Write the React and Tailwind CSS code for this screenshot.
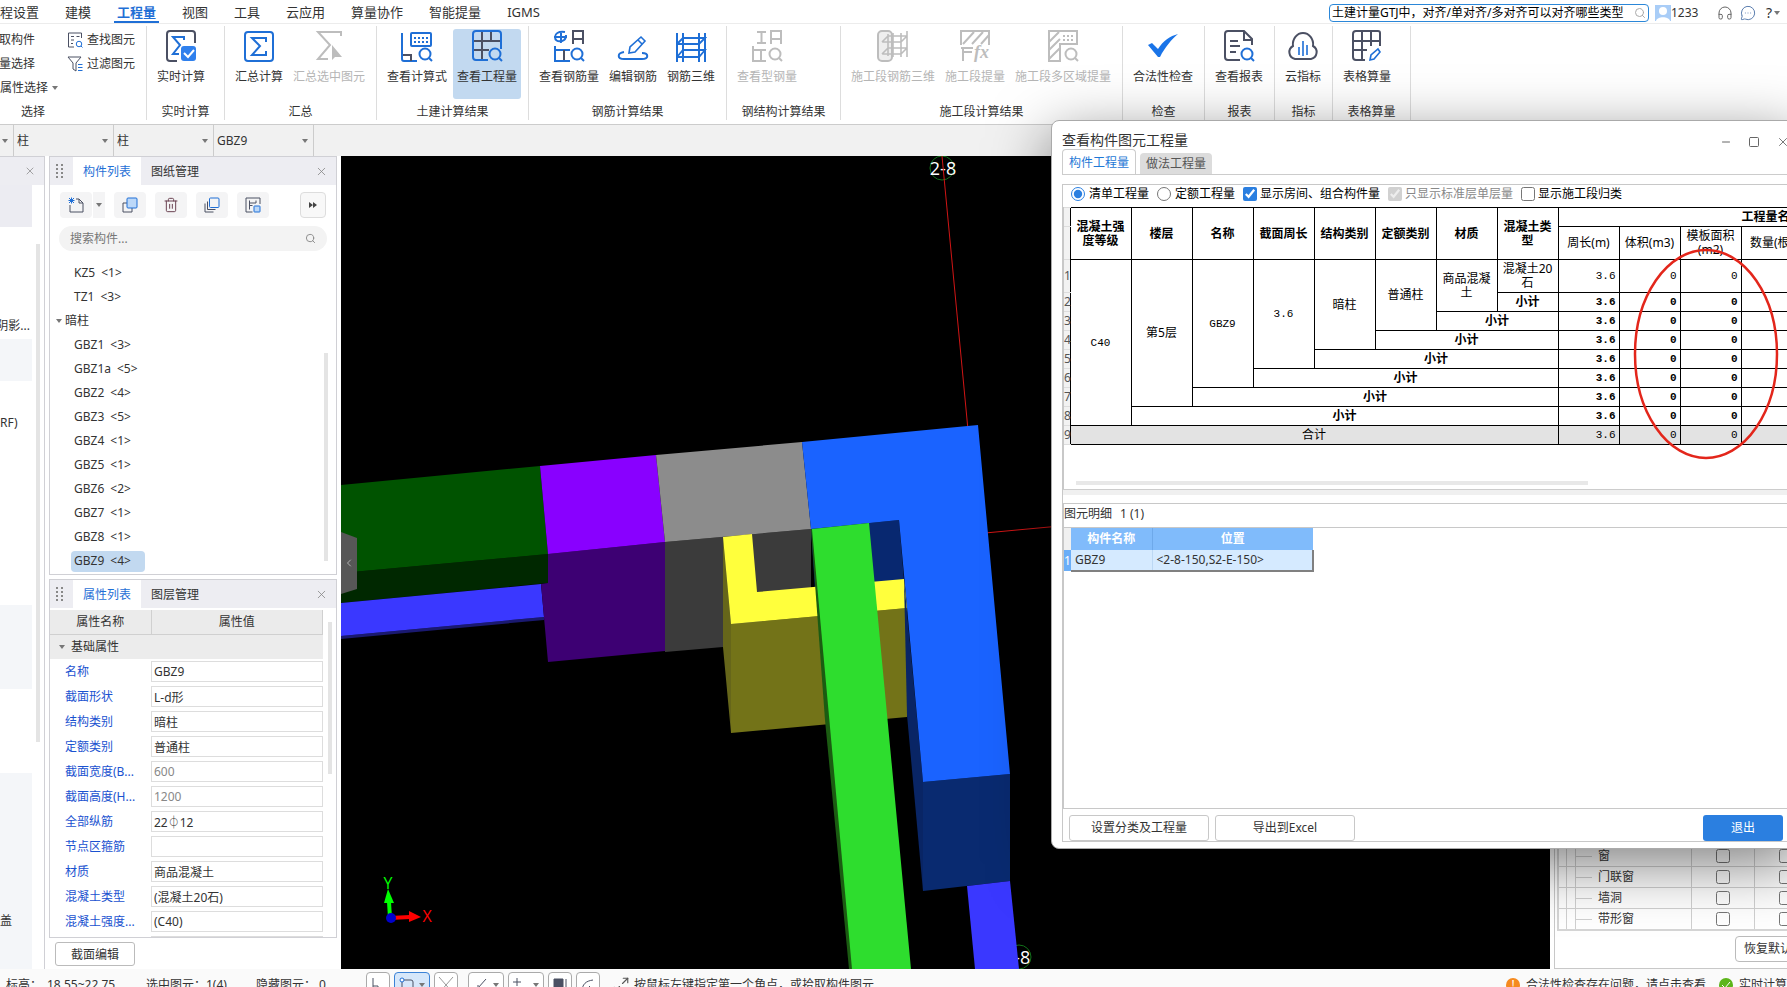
import React, { useState } from 'react';
import { Search, X, Minus, Square, Headphones, MessageCircleMore, ChevronLeft, Trash2, Maximize2 } from 'lucide-react';

const BLUE = '#1f6fd6';
const DARK = '#4b5063';
const GRAY = '#bdbdbd';

const menus = ['工程设置', '建模', '工程量', '视图', '工具', '云应用', '算量协作', '智能提量', 'IGMS'];

const components = [
  ['GBZ1', '<3>'],
  ['GBZ1a', '<5>'],
  ['GBZ2', '<4>'],
  ['GBZ3', '<5>'],
  ['GBZ4', '<1>'],
  ['GBZ5', '<1>'],
  ['GBZ6', '<2>'],
  ['GBZ7', '<1>'],
  ['GBZ8', '<1>'],
  ['GBZ9', '<4>'],
];

const properties = [
  ['名称', 'GBZ9'],
  ['截面形状', 'L-d形'],
  ['结构类别', '暗柱'],
  ['定额类别', '普通柱'],
  ['截面宽度(B...', '600', true],
  ['截面高度(H...', '1200', true],
  ['全部纵筋', '22⏀12'],
  ['节点区箍筋', ''],
  ['材质', '商品混凝土'],
  ['混凝土类型', '(混凝土20石)'],
  ['混凝土强度...', '(C40)'],
];

const Caret = ({ className = '' }) => (
  <svg viewBox="0 0 6 4" className={`w-[6px] h-[4px] shrink-0 ${className}`}>
    <path d="M0 0h6L3 4z" fill="#777" />
  </svg>
);

const Icon = ({ children, className = 'w-8 h-8' }) => (
  <svg viewBox="0 0 32 32" fill="none" strokeWidth="2" className={className}>
    {children}
  </svg>
);

const Magnifier = ({ color = BLUE }) => (
  <g stroke={color}>
    <circle cx="24" cy="24" r="5.5" />
    <path d="M28 28l3 3" />
  </g>
);

const RealtimeIcon = () => (
  <Icon>
    <path d="M12 31H5a3 3 0 0 1-3-3V4a3 3 0 0 1 3-3h22a3 3 0 0 1 3 3v9" stroke={DARK} />
    <path d="M19 10V7H8l7 8-7 9h6" stroke={BLUE} />
    <rect x="16" y="16" width="15" height="15" rx="3" fill="#2f80ed" />
    <path d="M19 23l4 4 6-7" stroke="#fff" />
  </Icon>
);

const SumIcon = () => (
  <Icon>
    <rect x="2" y="2" width="28" height="29" rx="3" stroke={BLUE} />
    <path d="M23 12V8H9l8 8-8 9h14v-4" stroke={BLUE} />
  </Icon>
);

const SumSelectedIcon = () => (
  <Icon>
    <path d="M28 6V2H5l12 13L5 29h10" stroke={GRAY} />
    <path d="M19 15v15l3-3h7z" fill={GRAY} />
  </Icon>
);

const FormulaIcon = () => (
  <Icon>
    <path d="M1 3v26a2 2 0 0 0 2 2h13" stroke={BLUE} />
    <path d="M2 25h8v6" stroke={DARK} />
    <rect x="10" y="3" width="20" height="13" rx="1" stroke={BLUE} />
    <path d="M13 8h15M13 12h15" stroke={BLUE} strokeDasharray="2 2" />
    <Magnifier />
  </Icon>
);

const QuantityIcon = () => (
  <Icon>
    <path d="M2 11h28M11 1v19M20 1v10M2 20h16M11 20v10" stroke={DARK} />
    <path d="M17 30H5a3 3 0 0 1-3-3V4a3 3 0 0 1 3-3h22a3 3 0 0 1 3 3v15" stroke={BLUE} />
    <Magnifier />
  </Icon>
);

const RebarViewIcon = () => (
  <Icon>
    <path d="M8 1v12M12 2C5 1 2 4 2 7s2 5 7 4c4-1 4-4 4-6M1 7h13" stroke={BLUE} />
    <path d="M20 14V1h10v13M20 9h10" stroke={DARK} />
    <path d="M2 16v15h15M2 20h15" stroke={BLUE} />
    <path d="M11 20v10" stroke={DARK} />
    <Magnifier />
  </Icon>
);

const RebarEditIcon = () => (
  <Icon>
    <path d="M7 22c-7 1-7 7 0 7h18c7 0 7-6 0-6" stroke={BLUE} />
    <path d="M12 23l1-6 11-10 4 4-10 11zM21 10l4 4" stroke={BLUE} strokeWidth="1.6" />
  </Icon>
);

const Rebar3dIcon = () => (
  <Icon>
    <path d="M2 3v29M8 3v29M24 3v29M30 3v29" stroke={BLUE} />
    <path d="M2 14L8 8h22l-6 6H2M2 27l6-7h22l-6 7H2" stroke={BLUE} strokeWidth="1.8" />
  </Icon>
);

const SteelIcon = () => (
  <Icon>
    <path d="M6 2h9M6 13h9M10.500 2v11M20 14V1h10v13M20 9h10" stroke={GRAY} />
    <path d="M2 16v15h13M2 20h13M10 20v10" stroke={GRAY} />
    <Magnifier color={GRAY} />
  </Icon>
);

const Stage3dIcon = () => (
  <Icon>
    <rect x="1" y="1" width="14" height="30" rx="4" fill="#eee" stroke={GRAY} />
    <path d="M11 4v22M16 3v24M24 3v24M30 1v26M5 12l6-6h19M5 12h19l6-6M5 24l6-6h19M5 24h19l6-6" stroke={GRAY} strokeWidth="1.6" />
  </Icon>
);

const StageQtyIcon = () => (
  <Icon>
    <path d="M2 15V1h28v14M4 14L15 2M13 14L24 2M22 14l8-9M4 18v13M4 22h9M2 18h12" stroke={GRAY} />
    <text x="15" y="28" fontSize="18" fontStyle="italic" fontWeight="bold" fontFamily="Liberation Serif" fill={GRAY}>fx</text>
  </Icon>
);

const StageAreaIcon = () => (
  <Icon>
    <path d="M13 14V31H2V1h28v13H13zM2 12L12 2M2 20l11-11M2 29l11-11" stroke={GRAY} />
    <path d="M16 6h12M16 10h12" stroke={GRAY} strokeDasharray="2 2" />
    <Magnifier color={GRAY} />
  </Icon>
);

const CheckIcon = () => (
  <Icon>
    <path d="M1 15l4-2 6 6C16 11 23 6 31 4c-6 5-13 13-18 23h-2z" fill="#1a74e8" />
  </Icon>
);

const ReportIcon = () => (
  <Icon>
    <path d="M17 30H5a3 3 0 0 1-3-3V4a3 3 0 0 1 3-3h16l8 8v6M21 1v9h8M7 11h8M7 16h10M7 22h6" stroke={DARK} />
    <Magnifier />
  </Icon>
);

const CloudIcon = () => (
  <Icon>
    <path d="M8 29a7 7 0 0 1-2-13c-1-7 4-13 10-13s11 6 10 13a7 7 0 0 1-2 13z" stroke={DARK} />
    <path d="M12 17v8M16 11v15M20 15v10" stroke={BLUE} strokeWidth="1.6" />
  </Icon>
);

const TableIcon = () => (
  <Icon>
    <path d="M14 30H5a3 3 0 0 1-3-3V4a3 3 0 0 1 3-3h22a2 2 0 0 1 2 2v13M2 11h27M2 20h14M11 1v29M20 1v15" stroke={DARK} />
    <path d="M19 30l1-5 7-6 2 3-6 7z" stroke={BLUE} strokeWidth="1.6" />
  </Icon>
);

const groups = [
  { title: '实时计算', width: 'w-[78px]', tools: [[RealtimeIcon, '实时计算']] },
  { title: '汇总', width: 'w-[152px]', tools: [[SumIcon, '汇总计算'], [SumSelectedIcon, '汇总选中图元', 'off']] },
  { title: '土建计算结果', width: 'w-[152px]', tools: [[FormulaIcon, '查看计算式'], [QuantityIcon, '查看工程量', 'on']] },
  { title: '钢筋计算结果', width: 'w-[198px]', tools: [[RebarViewIcon, '查看钢筋量'], [RebarEditIcon, '编辑钢筋'], [Rebar3dIcon, '钢筋三维']] },
  { title: '钢结构计算结果', width: 'w-[114px]', tools: [[SteelIcon, '查看型钢量', 'off']] },
  { title: '施工段计算结果', width: 'w-[282px]', tools: [[Stage3dIcon, '施工段钢筋三维', 'off'], [StageQtyIcon, '施工段提量', 'off'], [StageAreaIcon, '施工段多区域提量', 'off']] },
  { title: '检查', width: 'w-[82px]', tools: [[CheckIcon, '合法性检查']] },
  { title: '报表', width: 'w-[70px]', tools: [[ReportIcon, '查看报表']] },
  { title: '指标', width: 'w-[58px]', tools: [[CloudIcon, '云指标']] },
  { title: '表格算量', width: 'w-[78px]', tools: [[TableIcon, '表格算量']] },
];

const toolState = {
  on: 'bg-[#c2d9f0] text-[#333]',
  off: 'text-[#b5b5b5]',
};

const MenuBar = () => (
  <header className="flex h-6 shrink-0 items-center justify-between border-b border-[#ececec] bg-white">
    <nav className="-ml-[26px] flex h-full text-[13px] leading-6">
      {menus.map((m) => (
        <a key={m} href="#menu" className="flex px-[10px]">
          <span className={m === '工程量' ? 'border-b-2 border-[#1f6fd6] px-[3px] font-bold text-[#1f6fd6]' : 'px-[3px]'}>{m}</span>
        </a>
      ))}
    </nav>
    <div className="flex items-center pt-[3px] pr-[7px]">
      <label className="flex h-[18px] w-80 items-center rounded-sm border border-[#2b87d8] px-[2px]">
        <input aria-label="搜索" className="min-w-0 flex-1 text-black outline-none" defaultValue="土建计量GTJ中，对齐/单对齐/多对齐可以对齐哪些类型" />
        <Search className="h-3 w-3 text-[#aaa]" />
      </label>
      <svg viewBox="0 0 16 16" className="ml-[6px] h-4 w-4 bg-[#a9cdf7]">
        <circle cx="8" cy="6" r="4" fill="#fff" />
        <path d="M1 16c1-5 13-5 14 0z" fill="#fff" />
      </svg>
      <span className="w-11">1233</span>
      <Headphones className="ml-[2px] h-4 w-4 text-[#666]" strokeWidth={1.5} />
      <MessageCircleMore className="ml-[7px] h-4 w-4 text-[#5c7fb0]" strokeWidth={1.5} />
      <span className="ml-[10px] text-sm leading-4">?</span>
      <Caret className="ml-[2px]" />
    </div>
  </header>
);

const Ribbon = () => (
  <div className="flex h-[101px] shrink-0 border-b border-[#ccc] bg-white pt-[2px]">
    <div className="mb-1 -ml-20 flex w-[227px] shrink-0 flex-col border-r border-[#ddd]">
      <div className="flex h-[79px]">
        <div className="w-[147px] pt-[2px] leading-6">
          <button className="block w-full pl-[67px] text-left">拾取构件</button>
          <button className="block w-full pl-[67px] text-left">批量选择</button>
          <button className="flex w-full items-center gap-1 pl-20 text-left">属性选择 <Caret /></button>
        </div>
        <div className="pt-[2px] leading-6">
          <button className="flex items-center gap-1">
            <Icon className="h-4 w-4">
              <path d="M14 30H3V2h26v10M8 9h6M8 16h6M8 23h4M19 9h6" stroke={DARK} />
              <Magnifier />
            </Icon>
            查找图元
          </button>
          <button className="flex items-center gap-1">
            <Icon className="h-4 w-4">
              <path d="M2 2h26L18 14v16l-6-4V14z" stroke={DARK} />
              <path d="M22 17h9M22 23h9M22 29h9" stroke={BLUE} />
            </Icon>
            过滤图元
          </button>
        </div>
      </div>
      <div className="pl-[101px] leading-4">选择</div>
    </div>
    {groups.map((g) => (
      <section key={g.title} className={`mb-1 flex shrink-0 flex-col border-r border-[#ddd] pt-[3px] ${g.width}`}>
        <div className="flex h-[76px] gap-[2px] pl-[6px]">
          {g.tools.map(([ToolIcon, label, state]) => (
            <button key={label} disabled={state === 'off'} className={`flex h-[70px] flex-col items-center gap-[7px] rounded-[3px] px-1 pt-px whitespace-nowrap ${toolState[state] || ''}`}>
              <ToolIcon />
              <span className="leading-4">{label}</span>
            </button>
          ))}
        </div>
        <div className="text-center leading-4 whitespace-nowrap">{g.title}</div>
      </section>
    ))}
  </div>
);

const Combo = ({ label, value }) => (
  <label className="relative flex h-full w-[100px] items-center border-r border-[#ccc]">
    <select aria-label={label} className="h-full w-full appearance-none pl-[3px] outline-none">
      <option>{value}</option>
    </select>
    <Caret className="absolute right-[5px]" />
  </label>
);

const SelectorBar = () => (
  <div className="flex h-[31px] shrink-0 bg-[#f1f1f1]">
    <div className="flex w-[14px] items-center border-r border-[#ccc] pl-[2px]"><Caret /></div>
    <Combo label="构件大类" value="柱" />
    <Combo label="构件类型" value="柱" />
    <Combo label="构件" value="GBZ9" />
  </div>
);

const NavStrip = () => (
  <aside className="mr-1 flex w-[45px] shrink-0 flex-col overflow-hidden border-t border-r border-[#d0d0d5] bg-white">
    <div className="flex h-7 shrink-0 items-center justify-end bg-[#ededf2] pr-2">
      <X className="h-3 w-3 text-[#888]" strokeWidth={1.5} />
    </div>
    <div className="flex flex-1">
      <div className="flex w-8 shrink-0 flex-col">
        <div className="h-[42px] bg-[#ececf2]" />
        <div className="flex h-28 items-end justify-end pr-[2px] pb-[5px] whitespace-nowrap">阴影...</div>
        <div className="h-[42px] bg-[#f4f6f9]" />
        <div className="flex h-56 pt-8 leading-5">RF)</div>
        <div className="h-[84px] bg-[#f4f6f9]" />
        <div className="h-[84px]" />
        <div className="flex-1 bg-[#f4f6f9] pt-[138px] leading-5">盖</div>
      </div>
      <div className="mt-[59px] ml-1 h-[498px] w-1 bg-[#e4e4e4]" />
    </div>
  </aside>
);

const PanelTabs = ({ tabs }) => (
  <div className="flex h-7 shrink-0 items-center bg-[#ededf2]">
    <svg viewBox="0 0 8 14" className="mx-[6px] h-[14px] w-2">
      {[1, 5, 9, 13].map((y) => (
        <g key={y} fill="#888">
          <rect x="0" y={y - 1} width="2" height="2" />
          <rect x="5" y={y - 1} width="2" height="2" />
        </g>
      ))}
    </svg>
    <button className="ml-[3px] h-full bg-white px-[10px] pt-px text-[#1f6fd6]">{tabs[0]}</button>
    <button className="h-full flex-1 px-[10px] pt-px text-left">{tabs[1]}</button>
    <button aria-label="关闭" className="pr-2"><X className="h-[13px] w-[13px] text-[#888]" strokeWidth={1.5} /></button>
  </div>
);

const IconButton = ({ label, children }) => (
  <button aria-label={label} className="flex h-[26px] w-8 items-center justify-center rounded-sm bg-[#f4f4f5]">{children}</button>
);

const ComponentPanel = ({ selected, onSelect }) => (
  <section className="flex h-[419px] shrink-0 flex-col border border-[#d0d0d5] bg-white">
    <PanelTabs tabs={['构件列表', '图纸管理']} />
    <div className="flex items-center gap-[9px] px-[10px] pt-[7px]">
      <div className="flex gap-px">
        <IconButton label="新建">
          <Icon className="h-4 w-4">
            <path d="M16 4h6l8 8v18H4V16M22 4v8h8" stroke={DARK} />
            <path d="M2 2l10 10M12 2L2 12M7 1v12M1 7h12" stroke={BLUE} />
          </Icon>
        </IconButton>
        <button aria-label="新建选项" className="flex h-[26px] w-3 items-center justify-center bg-[#f4f4f5]"><Caret /></button>
      </div>
      <IconButton label="复制">
        <Icon className="h-4 w-4">
          <path d="M10 12H2v18h18v-8" stroke={DARK} />
          <rect x="10" y="2" width="20" height="20" rx="2" fill="#bcd8f8" stroke={BLUE} />
        </Icon>
      </IconButton>
      <IconButton label="删除"><Trash2 className="h-4 w-4 text-[#6b4352]" strokeWidth={1.5} /></IconButton>
      <IconButton label="层间复制">
        <Icon className="h-4 w-4">
          <path d="M7 9v16h16M2 13v17h17" stroke={DARK} />
          <rect x="11" y="2" width="19" height="19" rx="2" stroke={BLUE} />
        </Icon>
      </IconButton>
      <IconButton label="存档">
        <Icon className="h-4 w-4">
          <path d="M15 30H2V2h28v12M9 7v18M9 12h13V7M15 17H9" stroke={DARK} />
          <rect x="18" y="18" width="12" height="12" rx="1" fill="#bcd8f8" stroke={BLUE} />
        </Icon>
      </IconButton>
      <button aria-label="更多" className="ml-auto flex h-[26px] w-[26px] items-center justify-center rounded-sm border border-[#ddd] bg-[#f8f8f8]">
        <svg viewBox="0 0 8 6" className="h-[6px] w-2"><path d="M0 0l4 3-4 3zM4 0l4 3-4 3z" fill="#444" /></svg>
      </button>
    </div>
    <label className="mx-[9px] mt-2 flex h-[25px] shrink-0 items-center rounded-full bg-[#f3f3f3] px-[11px]">
      <input aria-label="搜索构件" placeholder="搜索构件..." className="min-w-0 flex-1 outline-none placeholder:text-[#777]" />
      <Search className="h-[11px] w-[11px] text-[#888]" />
    </label>
    <div className="mt-[10px] flex min-h-0 flex-1">
      <ul className="flex-1 leading-6">
        <li className="flex gap-[6px] pl-6"><span>KZ5</span><span>{'<1>'}</span></li>
        <li className="flex gap-[6px] pl-6"><span>TZ1</span><span>{'<3>'}</span></li>
        <li className="flex items-center gap-[3px] pl-[6px]"><Caret />暗柱</li>
        {components.map(([name, count]) => (
          <li key={name} className="flex h-6 items-center pl-[21px]">
            <button
              onClick={() => onSelect(name)}
              className={`flex h-[21px] w-[74px] items-center gap-[6px] rounded-sm pl-[3px] ${selected === name ? 'bg-[#c2d9f0]' : ''}`}
            >
              <span>{name}</span><span>{count}</span>
            </button>
          </li>
        ))}
      </ul>
      <div className="mt-[92px] mr-2 h-[208px] w-1 bg-[#e4e4e4]" />
    </div>
  </section>
);

const PropertyPanel = () => (
  <section className="mt-1 flex min-h-0 flex-1 flex-col border border-[#d0d0d5] bg-white">
    <PanelTabs tabs={['属性列表', '图层管理']} />
    <div className="flex min-h-0 flex-1 overflow-hidden pt-[2px]">
      <table className="h-min flex-1 table-fixed border-collapse">
        <thead>
          <tr className="h-6 bg-[#ebebeb]">
            <th className="w-[101px] border-r border-b border-[#d0d0d0] font-normal">属性名称</th>
            <th className="border-r border-b border-[#d0d0d0] font-normal">属性值</th>
          </tr>
        </thead>
        <tbody>
          <tr className="h-[25px] bg-[#ececec]">
            <td colSpan="2"><div className="flex items-center gap-[6px] pl-[9px]"><Caret />基础属性</div></td>
          </tr>
          {properties.map(([name, value, muted]) => (
            <tr key={name} className="h-[25px]">
              <td className="pl-[15px] whitespace-nowrap text-[#1a52d0]"><label htmlFor={name}>{name}</label></td>
              <td>
                <input id={name} defaultValue={value} className={`block h-[21px] w-full border border-[#ddd] px-[2px] outline-none ${muted ? 'text-[#888]' : ''}`} />
              </td>
            </tr>
          ))}
          <tr className="h-[25px]">
            <td />
            <td><input aria-label="备注" className="block h-[21px] w-full border border-[#ddd] px-[2px] outline-none" /></td>
          </tr>
        </tbody>
      </table>
      <div className="mt-3 mr-1 ml-[5px] h-[152px] w-1 bg-[#e4e4e4]" />
    </div>
  </section>
);

const Scene = () => (
  <div className="relative min-w-0 flex-1 bg-black">
    <svg viewBox="341 156 1209 813" preserveAspectRatio="xMinYMin slice" className="absolute inset-0 h-full w-full">
      <g fill="none" stroke="#12701a">
        <circle cx="942" cy="168" r="12" />
        <circle cx="1019" cy="957" r="12" />
      </g>
      <g fill="#fff" fontSize="18" fontFamily="Open Sans" textAnchor="middle">
        <text x="943" y="175">2-8</text>
        <text x="1017" y="964">2-8</text>
      </g>
      <g fill="none" stroke="#d01515">
        <path d="M942 156L968 430M985 533L1060 526" />
      </g>
      <path d="M341 573L548 554V583L341 603z" fill="#002800" />
      <path d="M341 636L544 617V620L341 639z" fill="#1a1970" />
      <path d="M341 603L541 584L544 617L341 636z" fill="#3a38ff" />
      <path d="M341 485L540 466L548 554L341 573z" fill="#005300" />
      <path d="M541 584L548 583V554L665 542V651L548 662z" fill="#3d0073" />
      <path d="M540 466L656 455L665 542L548 554z" fill="#8900ff" />
      <path d="M665 542L811 529V590L723 647L665 652z" fill="#3b3b3b" />
      <path d="M656 455L802 442L811 529L665 542z" fill="#8c8c8c" />
      <path d="M811 529L899 520L904 580L815 590z" fill="#082870" />
      <path d="M723 537L731 624V733L723 647z" fill="#66661a" />
      <path d="M731 624L907 608V717L731 733z" fill="#737318" />
      <path d="M723 537L752 534L757 592L904 579L907 608L731 624z" fill="#ffff3c" />
      <path d="M904 580L923 782V891L907 715z" fill="#092565" />
      <path d="M923 782L1010 774V881L923 891z" fill="#092a70" />
      <path d="M802 442L978 425L1010 774L923 782L899 520L811 529z" fill="#1a63ff" />
      <path d="M811 529L820 529L856 969H849L825 720z" fill="#1b5c12" />
      <path d="M812 529L869 523L911 969H852z" fill="#2edd2e" />
      <path d="M967 886L1010 881L1019 969H975z" fill="#3a38ff" />
      <path d="M390 918L389 902" stroke="#0f0" strokeWidth="4" />
      <path d="M388 889L394 903H384z" fill="#0f0" />
      <path d="M390 918L410 917" stroke="#f00" strokeWidth="4" />
      <path d="M421 917L409 922V911z" fill="#f00" />
      <circle cx="391" cy="918" r="5" fill="#00c" />
      <g fontSize="16" fontFamily="Open Sans" textAnchor="middle">
        <text x="388" y="889" fill="#0f0">Y</text>
        <text x="427" y="922" fill="#f00">X</text>
      </g>
      <path d="M341 532L357 538V589L341 594z" fill="#575757" />
    </svg>
    <button aria-label="收起" className="absolute top-[375px] left-0 flex h-16 w-4 items-center justify-center text-[#ccc]">
      <ChevronLeft className="h-3 w-3" strokeWidth={1.5} />
    </button>
  </div>
);

const DisplayPanel = () => (
  <aside className="flex w-[233px] shrink-0 flex-col justify-end overflow-hidden border-b border-l border-[#c8c8c8] bg-white">
    <table className="ml-[2px] w-64 table-fixed border-collapse border-b-2 border-l-2 border-[#d5d5d5]">
      <tbody>
        {['门', '窗', '门联窗', '墙洞', '带形窗'].map((name) => (
          <tr key={name} className="h-[21px] border-b border-[#d0d0d0]">
            <td className="w-[133px] border-r border-[#d0d0d0]">
              <div className="flex h-5 items-center pl-[7px]">
                <span className="h-full w-[10px] border-x border-[#d0d0d0]" />
                <span className="mr-[6px] w-4 border-t border-[#d0d0d0]" />
                {name}
              </div>
            </td>
            {['显示图元', '显示名称'].map((col) => (
              <td key={col} className="w-[63px] border-r border-[#d0d0d0]">
                <input type="checkbox" aria-label={`${name}${col}`} className="mx-auto block h-[14px] w-[14px]" />
              </td>
            ))}
          </tr>
        ))}
      </tbody>
    </table>
    <div className="flex h-[37px] shrink-0 items-start justify-end pt-[5px]">
      <button className="-mr-[38px] h-[26px] rounded-sm border border-[#bbb] px-2 whitespace-nowrap">恢复默认设置</button>
    </div>
  </aside>
);

const QuantityTable = () => {
  const cell = 'border border-black px-[3px] py-0';
  const mono = "font-['Liberation_Mono','Noto_Sans_CJK_SC',monospace] text-[11px]";
  const num = `border border-black p-0 pr-[3px] text-right ${mono}`;
  const rowNo = 'border-y border-[#ddd] bg-[#f2f2f2] p-0 text-[#555]';
  const values = ['3.6', '0', '0', '0', '0', '0', '0'];
  return (
    <table className="w-[921px] table-fixed border-collapse text-center leading-[14px] text-black">
      <colgroup>
        <col className="w-[6px]" />
        {Array.from({ length: 15 }, (_, i) => <col key={i} className="w-[61px]" />)}
      </colgroup>
      <thead>
        <tr className="h-[19px]">
          <td className={rowNo} />
          {['混凝土强度等级', '楼层', '名称', '截面周长', '结构类别', '定额类别', '材质', '混凝土类型'].map((h) => (
            <th key={h} rowSpan="2" className={cell}>{h}</th>
          ))}
          <th colSpan="7" className={cell}>工程量名称</th>
        </tr>
        <tr className="h-[33px]">
          <td className={rowNo} />
          {['周长(m)', '体积(m3)', '模板面积(m2)', '数量(根)', '高度(m)', '截面面积(m2)', '长度(m)'].map((h) => (
            <th key={h} className="border border-black p-0 font-normal break-all">{h}</th>
          ))}
        </tr>
      </thead>
      <tbody>
        <tr className="h-[33px]">
          <td className={rowNo}>1</td>
          <td rowSpan="8" className={`${cell} ${mono}`}>C40</td>
          <td rowSpan="7" className={cell}>第5层</td>
          <td rowSpan="6" className={`${cell} ${mono}`}>GBZ9</td>
          <td rowSpan="5" className={`${cell} ${mono}`}>3.6</td>
          <td rowSpan="4" className={cell}>暗柱</td>
          <td rowSpan="3" className={cell}>普通柱</td>
          <td rowSpan="2" className={cell}>商品混凝土</td>
          <td className={cell}>混凝土20石</td>
          {values.map((v, i) => <td key={i} className={num}>{v}</td>)}
        </tr>
        {[1, 2, 3, 4, 5, 6, 7].map((span) => (
          <tr key={span} className="h-[19px] font-bold">
            <td className={`${rowNo} font-normal`}>{span + 1}</td>
            <td colSpan={span} className={cell}>小计</td>
            {values.map((v, i) => <td key={i} className={num}>{v}</td>)}
          </tr>
        ))}
        <tr className="h-[19px] bg-[#e3e3e3]">
          <td className={rowNo}>9</td>
          <td colSpan="8" className={cell}>合计</td>
          {values.map((v, i) => <td key={i} className={num}>{v}</td>)}
        </tr>
      </tbody>
    </table>
  );
};

const QuantityDialog = () => (
  <div role="dialog" aria-label="查看构件图元工程量" className="absolute top-[120px] -right-[14px] flex h-[729px] w-[750px] flex-col rounded-lg border border-[#aaa] bg-white px-[10px] pb-[6px] shadow-[0_16px_60px_rgba(0,0,0,0.5)]">
    <div className="flex h-7 shrink-0 items-end justify-between">
      <h1 className="text-sm leading-[18px]">查看构件图元工程量</h1>
      <div className="flex items-center gap-4 text-[#666]">
        <Minus className="h-3 w-3" strokeWidth={2} />
        <Square className="h-3 w-3" strokeWidth={2} />
        <X className="h-[14px] w-[14px]" strokeWidth={1.5} />
      </div>
    </div>
    <div className="flex h-[26px] shrink-0 items-end gap-1 border-b border-[#ccc]">
      <button className="h-[25px] rounded-t-sm border border-b-0 border-[#ccc] px-[6px] pt-px text-[#1f78d6]">构件工程量</button>
      <button className="h-[21px] rounded-t-sm bg-[#dcdcdc] px-[6px] pt-px text-[#555]">做法工程量</button>
    </div>
    <div className="mt-[9px] flex min-h-0 flex-1 flex-col border border-[#c8c8c8]">
      <div className="flex h-[22px] shrink-0 items-start pt-px pl-2 leading-4 text-black">
        <label className="mr-2 flex items-center gap-1"><input type="radio" name="kind" defaultChecked className="h-[14px] w-[14px] accent-[#2b7fe0]" />清单工程量</label>
        <label className="mr-2 flex items-center gap-1"><input type="radio" name="kind" className="h-[14px] w-[14px]" />定额工程量</label>
        <label className="mr-2 flex items-center gap-[3px]"><input type="checkbox" defaultChecked className="h-[14px] w-[14px] accent-[#2b7fe0]" />显示房间、组合构件量</label>
        <label className="mr-2 flex items-center gap-[3px] text-[#888]"><input type="checkbox" defaultChecked disabled className="h-[14px] w-[14px]" />只显示标准层单层量</label>
        <label className="flex items-center gap-[3px]"><input type="checkbox" className="h-[14px] w-[14px]" />显示施工段归类</label>
      </div>
      <div className="flex h-[282px] shrink-0 flex-col overflow-hidden border-l border-[#c8c8c8]">
        <QuantityTable />
        <div className="mt-auto mb-1 ml-3 h-1 w-[512px] shrink-0 bg-[#e8e8e8]" />
      </div>
      <div className="h-[6px] shrink-0 border-t border-[#ccc] bg-[#f0f0f0]" />
      <div className="mt-2 flex min-h-0 flex-1 flex-col border-y border-l border-[#c8c8c8]">
        <div className="flex h-6 shrink-0 gap-2 border-b border-[#c8c8c8] leading-5"><span>图元明细</span><span>1 (1)</span></div>
        <table className="w-[250px] table-fixed border-collapse">
          <thead>
            <tr className="h-[22px] bg-[#80bbfb] text-white">
              <td className="w-[7px] bg-[#f0f0f0]" />
              <th className="w-[81px] border-r border-[#6ea9ea]">构件名称</th>
              <th>位置</th>
            </tr>
          </thead>
          <tbody>
            <tr className="h-[21px] bg-[#d5eaff]">
              <td className="bg-[#6aaef8] text-white">1</td>
              <td className="border-r border-b-2 border-r-[#bcd8f4] border-b-[#808080] pl-1">GBZ9</td>
              <td className="border-r-2 border-b-2 border-[#808080] pl-1">{'<2-8-150,S2-E-150>'}</td>
            </tr>
          </tbody>
        </table>
      </div>
      <div className="flex h-8 shrink-0 items-end gap-[6px] px-[6px]">
        <button className="h-[26px] w-[140px] rounded-[3px] border border-[#c8c8c8]">设置分类及工程量</button>
        <button className="h-[26px] w-[140px] rounded-[3px] border border-[#c8c8c8]">导出到Excel</button>
        <button className="ml-auto h-[26px] w-20 rounded-[3px] bg-[#2b7fe0] text-white">退出</button>
      </div>
    </div>
    {/* markup drawn over the zero quantities */}
    <svg viewBox="0 0 148 216" className="pointer-events-none absolute top-[125px] left-[580px] h-[216px] w-[148px]">
      <ellipse cx="74" cy="108" rx="71" ry="104" fill="none" stroke="#e3261b" strokeWidth="2.5" />
    </svg>
  </div>
);

const ToolBox = ({ label, wide, active, children }) => (
  <button
    aria-label={label}
    className={`flex h-[26px] items-center justify-center gap-1 rounded-sm border ${wide ? 'w-9' : 'w-6'} ${active ? 'border-[#3b82d6] bg-[#d6e7fa]' : 'border-[#aaa] bg-white'}`}
  >
    <svg viewBox="0 0 16 16" fill="none" stroke={DARK} className="h-4 w-4">{children}</svg>
    {wide && <Caret />}
  </button>
);

const StatusBar = () => (
  <footer className="-mb-[14px] flex h-8 shrink-0 items-center bg-[#fafafa] whitespace-nowrap">
    <span className="w-[41px] pl-[6px]">标高：</span>
    <span className="w-[105px] pl-[6px]">18.55~22.75</span>
    <span className="w-[110px]">选中图元：1(4)</span>
    <span className="w-[110px]">隐藏图元： 0</span>
    <div className="flex gap-1">
      <ToolBox label="正交"><path d="M3 1v12h10M3 9h5v4" /></ToolBox>
      <ToolBox label="矩形" wide active><path d="M3 3h9a2 2 0 0 1 2 2v10H3z" /><circle cx="3" cy="3" r="2" fill="#fff" stroke={BLUE} /></ToolBox>
      <ToolBox label="交点"><path d="M1 0l14 16M15 0L1 16" stroke="#999" /></ToolBox>
      <span className="w-0.5" />
      <ToolBox label="垂点" wide><path d="M13 2L5 11M5 8v5h4" /></ToolBox>
      <ToolBox label="偏移" wide><path d="M0 5h8M4 1v8M8 11h8" /></ToolBox>
      <ToolBox label="填充"><path d="M2 2h9v10H2z" fill={DARK} /><path d="M14 2v13H5" /></ToolBox>
      <ToolBox label="弧"><path d="M2 15C2 7 6 4 13 3M9 9l5 5" /></ToolBox>
    </div>
    <Maximize2 className="mr-1 ml-3 h-[18px] w-[18px] text-[#555]" strokeWidth={1.5} />
    <span>按鼠标左键指定第一个角点，或拾取构件图元</span>
    <div className="ml-auto flex w-[281px] items-center gap-[6px]">
      <span className="flex h-[14px] w-[14px] shrink-0 items-center justify-center rounded-full bg-[#f58a1f] text-white">!</span>
      <span className="mr-[7px]">合法性检查存在问题，请点击查看</span>
      <svg viewBox="0 0 14 14" className="h-[14px] w-[14px] shrink-0">
        <circle cx="7" cy="7" r="7" fill="#5cb51a" />
        <path d="M3 7l3 3 5-6" fill="none" stroke="#fff" />
      </svg>
      <span>实时计算</span>
    </div>
  </footer>
);

export default function App() {
  const [selected, setSelected] = useState('GBZ9');

  return (
    <div className="relative flex h-screen flex-col overflow-hidden bg-white font-['Noto_Sans','Noto_Sans_CJK_SC',sans-serif] text-xs text-[#333]">
      <MenuBar />
      <Ribbon />
      <SelectorBar />
      <main className="flex min-h-0 flex-1">
        <NavStrip />
        <div className="mr-1 flex w-72 shrink-0 flex-col">
          <ComponentPanel selected={selected} onSelect={setSelected} />
          <PropertyPanel />
          <div className="flex h-[31px] shrink-0 items-start pt-1 pl-[6px]">
            <button className="h-6 w-20 rounded-[3px] border border-[#bbb] bg-white pt-px">截面编辑</button>
          </div>
        </div>
        <Scene />
        <div className="w-1 shrink-0" />
        <DisplayPanel />
      </main>
      <StatusBar />
      <QuantityDialog />
    </div>
  );
}
